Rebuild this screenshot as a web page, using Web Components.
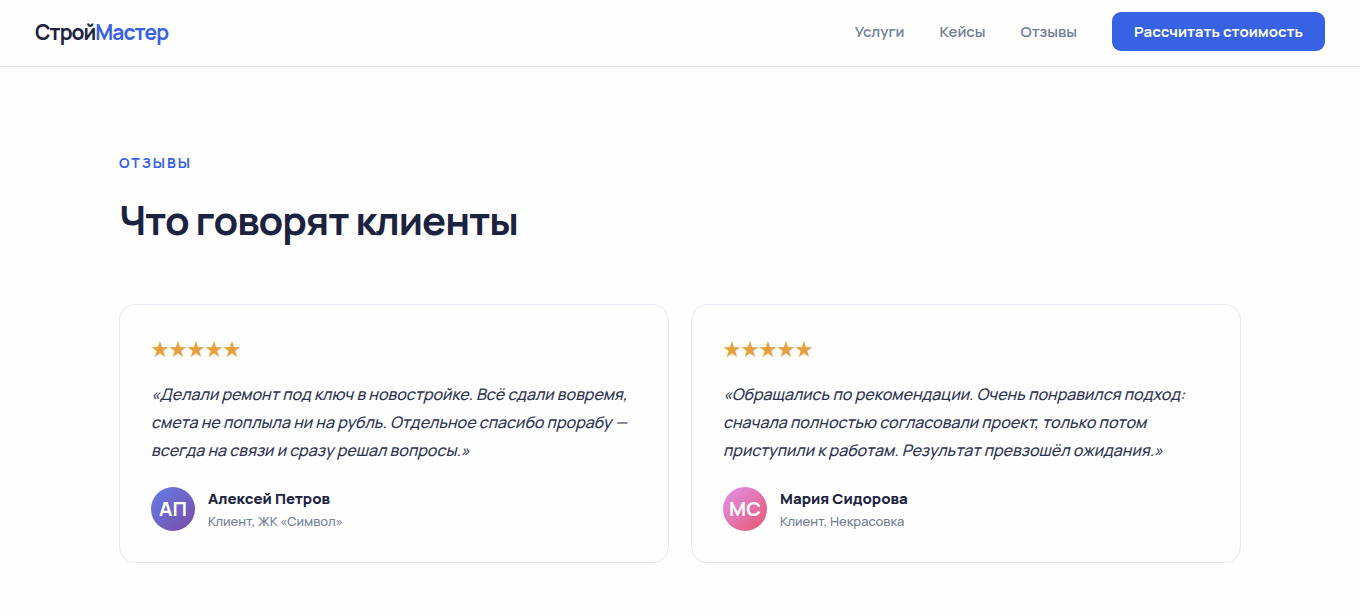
<!DOCTYPE html>
<html lang="ru">
<head>
<meta charset="UTF-8">
<meta name="viewport" content="width=device-width, initial-scale=1.0">
<title>СтройМастер</title>
<style>
  :root {
    --primary: #3862e4;
    --dark: #1c2340;
    --muted: #718096;
    --border: #e6e9f3;
  }
  body {
    margin: 0;
    background: #fefefe;
    color: var(--dark);
    font-family: Manrope, Inter, "Noto Sans", sans-serif;
  }
</style>
</head>
<body>
<site-header>
  <nav-link href="#services">Услуги</nav-link>
  <nav-link href="#cases">Кейсы</nav-link>
  <nav-link href="#reviews">Отзывы</nav-link>
</site-header>
<main>
  <reviews-section id="reviews">
    <span slot="label">Отзывы</span>
    <span slot="title">Что говорят клиенты</span>
    <review-card rating="5" initials="АП" from="#667eea" to="#764ba2">
      «Делали ремонт под ключ в новостройке. Всё сдали вовремя, смета не поплыла ни на рубль. Отдельное спасибо прорабу — всегда на связи и сразу решал вопросы.»
      <span slot="name">Алексей Петров</span>
      <span slot="about">Клиент, ЖК «Символ»</span>
    </review-card>
    <review-card rating="5" initials="МС" from="#e093f0" to="#e8566c">
      «Обращались по рекомендации. Очень понравился подход: сначала полностью согласовали проект, только потом приступили к работам. Результат превзошёл ожидания.»
      <span slot="name">Мария Сидорова</span>
      <span slot="about">Клиент, Некрасовка</span>
    </review-card>
  </reviews-section>
</main>

<script>
class SiteHeader extends HTMLElement {
  constructor() {
    super();
    this.attachShadow({ mode: 'open' });
    this.shadowRoot.innerHTML = `
      <style>
        :host {
          display: block;
          border-bottom: 1px solid var(--border);
        }
        header {
          display: flex;
          justify-content: space-between;
          align-items: center;
          padding: 12px 35px 15px;
        }
        .logo {
          color: var(--dark);
          font-size: 21px;
          line-height: 28px;
          font-weight: 700;
          letter-spacing: -1px;
          text-decoration: none;
        }
        .logo span {
          color: var(--primary);
        }
        nav {
          display: flex;
          align-items: center;
          gap: 35px;
        }
        button {
          padding: 9px 22px 8px;
          border: none;
          border-radius: 9px;
          background: var(--primary);
          color: white;
          font: inherit;
          font-size: 15px;
          line-height: 22px;
          font-weight: 700;
          cursor: pointer;
        }
        button:hover {
          background: #2b50c4;
        }
      </style>
      <header>
        <a class="logo" href="#">Строй<span>Мастер</span></a>
        <nav>
          <slot></slot>
          <button type="button">Рассчитать стоимость</button>
        </nav>
      </header>
    `;
  }
}

class NavLink extends HTMLElement {
  constructor() {
    super();
    this.attachShadow({ mode: 'open' });
    this.shadowRoot.innerHTML = `
      <style>
        :host {
          display: block;
        }
        a {
          color: var(--muted);
          font-size: 15px;
          line-height: 22px;
          font-weight: 600;
          text-decoration: none;
        }
        a:hover {
          color: var(--primary);
        }
      </style>
      <a><slot></slot></a>
    `;
  }

  connectedCallback() {
    this.shadowRoot.querySelector('a').href = this.getAttribute('href');
  }
}

class ReviewsSection extends HTMLElement {
  constructor() {
    super();
    this.attachShadow({ mode: 'open' });
    this.shadowRoot.innerHTML = `
      <style>
        :host {
          display: block;
          max-width: 1122px;
          margin: 0 auto;
          padding: 85px 24px 53px;
        }
        .label {
          color: var(--primary);
          font-size: 14px;
          line-height: 22px;
          font-weight: 700;
          letter-spacing: 2px;
          text-transform: uppercase;
        }
        h2 {
          margin: 21px 0 59px;
          font-size: 40px;
          line-height: 50px;
          font-weight: 700;
          letter-spacing: -1px;
        }
        .grid {
          display: grid;
          grid-template-columns: repeat(auto-fit, minmax(360px, 1fr));
          gap: 22px;
        }
      </style>
      <div class="label"><slot name="label"></slot></div>
      <h2><slot name="title"></slot></h2>
      <div class="grid"><slot></slot></div>
    `;
  }
}

class ReviewCard extends HTMLElement {
  constructor() {
    super();
    this.attachShadow({ mode: 'open' });
    this.shadowRoot.innerHTML = `
      <style>
        :host {
          display: block;
          padding: 31px;
          border: 1px solid var(--border);
          border-radius: 16px;
        }
        .stars {
          color: #e8a03c;
          font-family: "Noto Sans CJK JP", sans-serif;
          font-size: 18px;
          line-height: 24px;
        }
        blockquote {
          margin: 20px 0 23px;
          color: #2d3553;
          font-size: 16px;
          line-height: 28px;
          font-weight: 500;
          font-style: italic;
        }
        .author {
          display: flex;
          align-items: center;
          gap: 13px;
        }
        .avatar {
          display: flex;
          justify-content: center;
          align-items: center;
          width: 44px;
          height: 44px;
          border-radius: 50%;
          color: white;
          font-size: 20px;
          line-height: 28px;
          font-weight: 700;
        }
        .name {
          font-size: 15px;
          line-height: 24px;
          font-weight: 800;
        }
        .about {
          color: var(--muted);
          font-size: 13px;
          line-height: 20px;
          font-weight: 500;
        }
      </style>
      <div class="stars"></div>
      <blockquote><slot></slot></blockquote>
      <div class="author">
        <div class="avatar"></div>
        <div>
          <div class="name"><slot name="name"></slot></div>
          <div class="about"><slot name="about"></slot></div>
        </div>
      </div>
    `;
  }

  connectedCallback() {
    const from = this.getAttribute('from');
    const to = this.getAttribute('to');
    const avatar = this.shadowRoot.querySelector('.avatar');
    avatar.textContent = this.getAttribute('initials');
    avatar.style.background = `linear-gradient(135deg, ${from}, ${to})`;
    this.shadowRoot.querySelector('.stars').textContent = '★'.repeat(Number(this.getAttribute('rating')));
  }
}

customElements.define('site-header', SiteHeader);
customElements.define('nav-link', NavLink);
customElements.define('reviews-section', ReviewsSection);
customElements.define('review-card', ReviewCard);
</script>
</body>
</html>
